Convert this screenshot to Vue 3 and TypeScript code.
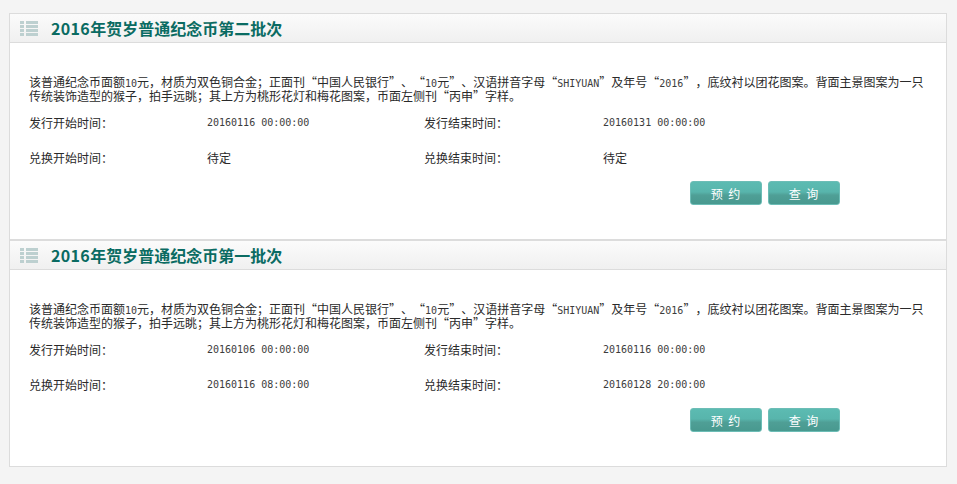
<script setup lang="ts">
interface Batch {
  title: string
  issueStart: string
  issueEnd: string
  swapStart: string
  swapEnd: string
}
const batches: Batch[] = [
  { title: '贺岁普通纪念币第二批次', issueStart: '20160116 00:00:00', issueEnd: '20160131 00:00:00', swapStart: '待定', swapEnd: '待定' },
  { title: '贺岁普通纪念币第一批次', issueStart: '20160106 00:00:00', issueEnd: '20160116 00:00:00', swapStart: '20160116 08:00:00', swapEnd: '20160128 20:00:00' },
]
</script>

<template>
  <div class="page">
    <section class="panel">
      <article v-for="b in batches" :key="b.title" class="batch">
        <header class="head">
          <svg class="icon" width="18" height="15" viewBox="0 0 18 15" aria-hidden="true">
            <g fill="#bdd0d0">
              <rect x="0" y="0" width="4" height="3" /><rect x="6" y="0" width="12" height="3" />
              <rect x="0" y="4" width="4" height="3" /><rect x="6" y="4" width="12" height="3" />
              <rect x="0" y="8" width="4" height="3" /><rect x="6" y="8" width="12" height="3" />
              <rect x="0" y="12" width="4" height="3" /><rect x="6" y="12" width="12" height="3" />
            </g>
          </svg>
          <h2 class="title"><span class="year">2016</span>年{{ b.title }}</h2>
        </header>
        <div class="body">
          <p class="desc">该普通纪念币面额<span class="m">10</span>元，材质为双色铜合金；正面刊“中国人民银行”、“<span class="m">10</span>元”、汉语拼音字母“<span class="m">SHIYUAN</span>”及年号“<span class="m">2016</span>”，底纹衬以团花图案。背面主景图案为一只传统装饰造型的猴子，拍手远眺；其上方为桃形花灯和梅花图案，币面左侧刊“丙申”字样。</p>
          <div class="grid">
            <span>发行开始时间：</span><span class="m">{{ b.issueStart }}</span>
            <span>发行结束时间：</span><span class="m">{{ b.issueEnd }}</span>
            <span>兑换开始时间：</span><span :class="{ m: b.swapStart !== '待定' }">{{ b.swapStart }}</span>
            <span>兑换结束时间：</span><span :class="{ m: b.swapEnd !== '待定' }">{{ b.swapEnd }}</span>
          </div>
          <div class="actions">
            <button class="btn" type="button">预 约</button>
            <button class="btn" type="button">查 询</button>
          </div>
        </div>
      </article>
    </section>
  </div>
</template>

<style>
html, body { margin: 0; background: #f4f4f4; }
</style>

<style scoped>
.page {
  width: 957px;
  height: 484px;
  padding: 13px 10px 0 9px;
  box-sizing: border-box;
  font-family: "Noto Sans CJK SC", sans-serif;
  color: #2a2a2a;
  text-spacing-trim: space-all;
  font-kerning: none;
}
.panel {
  width: 938px;
  height: 454px;
  box-sizing: border-box;
  border: 1px solid #dcdcdc;
  background: #fff;
}
.batch { height: 225px; box-sizing: border-box; }
.batch + .batch { border-top: 2px solid #dcdcdc; height: 227px; }
.head {
  height: 28px;
  border-bottom: 1px solid #dcdcdc;
  background: linear-gradient(#fbfbfb, #f0f0f0);
  display: flex;
  align-items: center;
  padding-left: 10px;
}
.icon { flex: none; margin-right: 13px; }
.title {
  margin: 0;
  font-size: 16px;
  font-weight: 700;
  line-height: 28px;
  color: #0a6b62;
}
.year { letter-spacing: 0.35px; }
.body { padding: 32px 0 0 19px; }
.desc {
  margin: 0;
  width: 898px;
  font-size: 12px;
  line-height: 14px;
}
.m { font-family: "DejaVu Sans Mono", monospace; font-size: 10px; color: #3c3c3c; }
.desc .m { line-height: 0; }
.grid {
  display: grid;
  grid-template-columns: 178px 217px 179px 1fr;
  grid-auto-rows: 35px;
  margin-top: 2px;
  font-size: 12px;
  line-height: 35px;
}
.actions {
  display: flex;
  justify-content: flex-end;
  gap: 6px;
  padding-right: 106px;
  margin-top: 6px;
}
.btn {
  width: 72px;
  height: 24px;
  padding: 0;
  border: 1px solid #6cbdb6;
  border-radius: 3px;
  background: linear-gradient(#5cbbb2 0%, #58b5ac 45%, #4f9f96 60%, #48998f 100%);
  color: #fff;
  font-family: inherit;
  font-size: 12px;
  letter-spacing: 1px;
  word-spacing: 1px;
}
</style>
